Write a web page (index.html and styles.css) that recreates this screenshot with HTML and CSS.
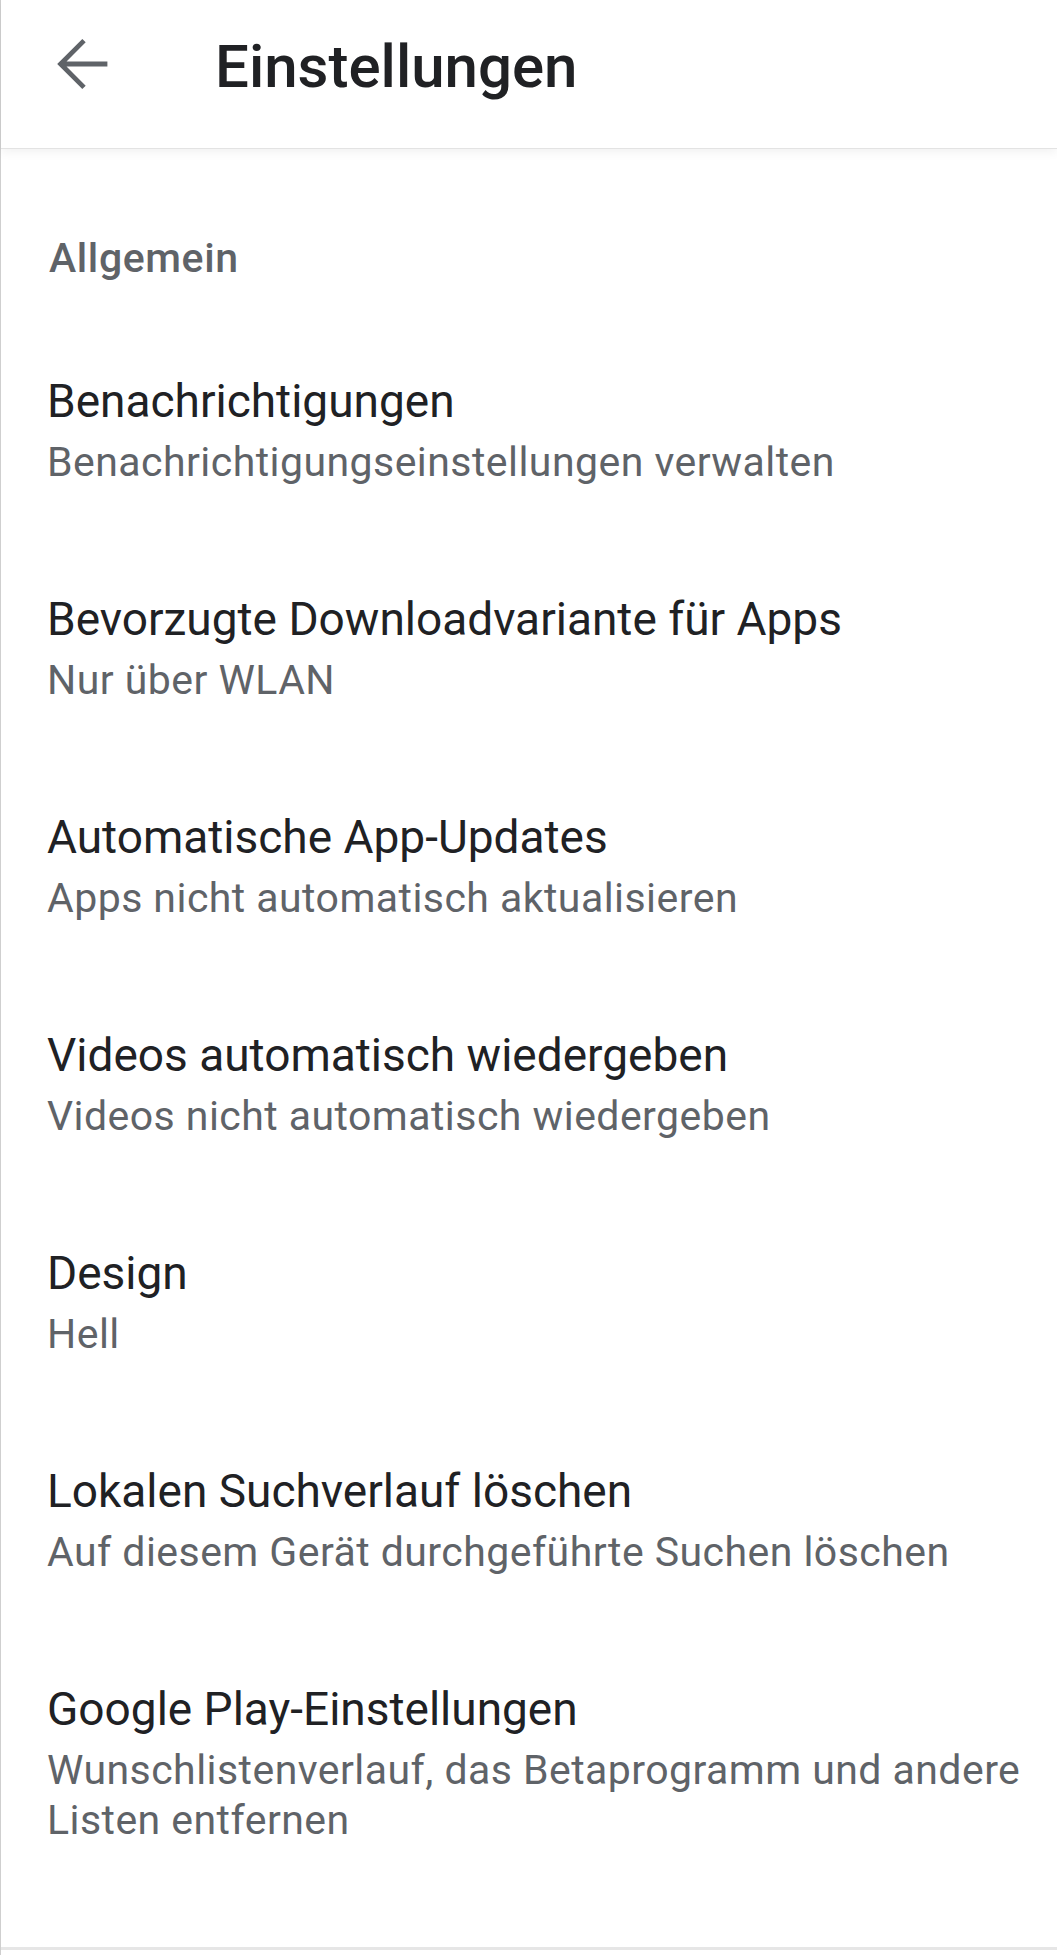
FILE: index.html
```html
<!DOCTYPE html>
<html>
<head>
    <meta charset="utf-8">
    <link rel="stylesheet" href="styles.css">
</head>
<body>
    <div class="page">
        <header class="topbar">
            <button class="back" type="button" aria-label="Zurück">
                <svg viewBox="0 0 24 24" width="72" height="72">
                    <path d="M19.8 12H4.6M12 4.2L4.2 12l7.8 7.8" fill="none" stroke="#5f6368" stroke-width="1.6"/>
                </svg>
            </button>
            <h1 class="title">Einstellungen</h1>
        </header>

        <div class="section-title">Allgemein</div>

        <div class="item">
            <div class="item-title">Benachrichtigungen</div>
            <div class="item-sub">Benachrichtigungseinstellungen verwalten</div>
        </div>
        <div class="item">
            <div class="item-title">Bevorzugte Downloadvariante für Apps</div>
            <div class="item-sub">Nur über WLAN</div>
        </div>
        <div class="item">
            <div class="item-title">Automatische App-Updates</div>
            <div class="item-sub">Apps nicht automatisch aktualisieren</div>
        </div>
        <div class="item">
            <div class="item-title">Videos automatisch wiedergeben</div>
            <div class="item-sub">Videos nicht automatisch wiedergeben</div>
        </div>
        <div class="item">
            <div class="item-title">Design</div>
            <div class="item-sub">Hell</div>
        </div>
        <div class="item">
            <div class="item-title">Lokalen Suchverlauf löschen</div>
            <div class="item-sub">Auf diesem Gerät durchgeführte Suchen löschen</div>
        </div>
        <div class="item">
            <div class="item-title">Google Play-Einstellungen</div>
            <div class="item-sub">Wunschlistenverlauf, das Betaprogramm und andere Listen entfernen</div>
        </div>

        <div class="divider"></div>
    </div>
</body>
</html>
```

FILE: styles.css
```css
body {
    margin: 0;
    padding: 0;
    background-color: #fff;
    font-family: Roboto, "Noto Sans", Arial, sans-serif;
}
.page {
    min-height: 1955px;
    border-left: 1px solid #cfcfcf;
    box-sizing: border-box;
}
.topbar {
    display: flex;
    align-items: center;
    height: 128px;
    padding-bottom: 20px;
    border-bottom: 1px solid #e3e3e3;
    box-shadow: 0 3px 10px rgba(0,0,0,0.06);
}
.back {
    width: 72px;
    height: 72px;
    margin-left: 47px;
    padding: 0;
    border: none;
    background: none;
}
.back svg {
    display: block;
}
.title {
    margin: 5px 0 0 95px;
    font-size: 60px;
    font-weight: 500;
    line-height: 72px;
    color: #202124;
}
.section-title {
    padding: 85px 48px 39px;
    font-size: 41px;
    font-weight: 500;
    line-height: 48px;
    letter-spacing: 0.6px;
    color: #5f6368;
}
.item {
    padding: 52px 24px 52px 46px;
}
.item-title {
    font-size: 46px;
    line-height: 56px;
    color: #202124;
}
.item-sub {
    margin-top: 8px;
    font-size: 41px;
    line-height: 50px;
    letter-spacing: 0.45px;
    color: #5f6368;
}
.divider {
    margin-top: 50px;
    height: 3px;
    background-color: #e6e6e6;
}
```
